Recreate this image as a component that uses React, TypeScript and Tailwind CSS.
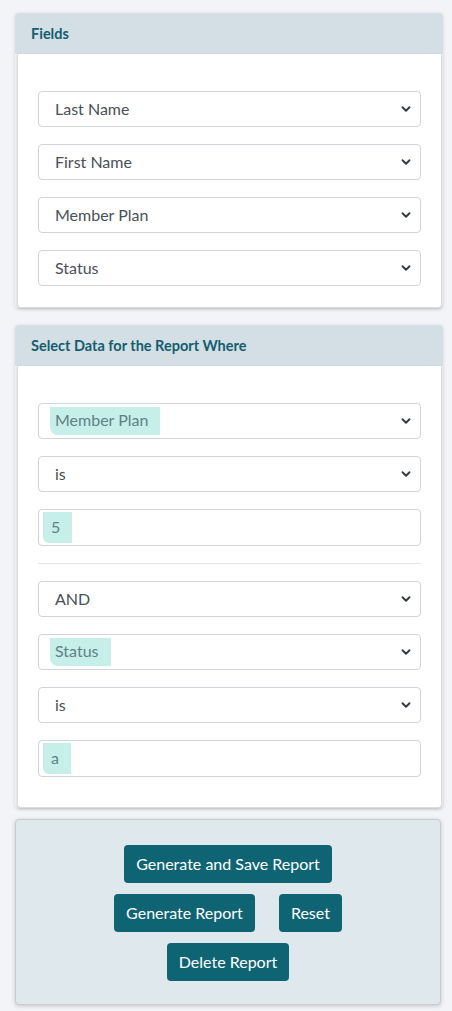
import { ChevronDown } from "lucide-react";

const font = { fontFamily: "Lato, 'Noto Sans', sans-serif" };

function FakeSelect({ value, marked }: { value: string; marked?: boolean }) {
  return (
    <div className="h-9 flex items-center justify-between rounded border border-[#ced4da] bg-white pl-4 pr-[7px]">
      {marked ? (
        <span className="-ml-[5px] pl-[5px] pr-3 pt-[1px] pb-[3px] bg-[#c6efe9] rounded-bl-lg text-[#5f8184] text-base">
          {value}
        </span>
      ) : (
        <span className="text-base text-[#495057]">{value}</span>
      )}
      <ChevronDown className="w-[14px] h-[14px] text-[#343a40]" strokeWidth={3.2} />
    </div>
  );
}

function FakeInput({ value }: { value: string }) {
  return (
    <div className="h-[37px] flex items-center rounded border border-[#ced4da] bg-white px-[4px]">
      <span className="pl-2 pr-3 pt-[3px] pb-[4px] bg-[#c6efe9] rounded-bl-md text-[#5f8184] text-base">
        {value}
      </span>
    </div>
  );
}

function Card({ title, children, className }: { title: string; children: React.ReactNode; className: string }) {
  return (
    <div className="shadow-[0_1px_4px_rgba(0,0,0,0.12)] rounded">
      <div className="h-[41px] flex items-center px-4 bg-[#d3dfe4] rounded-t">
        <h2 className="text-[14.5px] font-bold text-[#135d6f]">{title}</h2>
      </div>
      <div className={`ml-[2px] mr-[1px] bg-white rounded-b border border-t-0 border-[#dcdcdc] shadow-[0_1px_3px_rgba(0,0,0,0.15)] pl-5 pr-[20px] ${className}`}>
        {children}
      </div>
    </div>
  );
}

export default function App() {
  return (
    <div className="min-h-screen bg-[#f3f4f8] pl-[15px] pr-[9px] pt-[13px] pb-2 flex flex-col gap-[17px]" style={font}>
      <Card title="Fields" className="pt-[37px] pb-[21px]">
        <div className="flex flex-col gap-[17px]">
          <FakeSelect value="Last Name" />
          <FakeSelect value="First Name" />
          <FakeSelect value="Member Plan" />
          <FakeSelect value="Status" />
        </div>
      </Card>

      <Card title="Select Data for the Report Where" className="pt-[37px] pb-[30px]">
        <div className="flex flex-col gap-[17px]">
          <FakeSelect value="Member Plan" marked />
          <FakeSelect value="is" />
          <FakeInput value="5" />
        </div>
        <hr className="my-[17px] border-[#e2e4e8]" />
        <div className="flex flex-col gap-[17px]">
          <FakeSelect value="AND" />
          <FakeSelect value="Status" marked />
          <FakeSelect value="is" />
          <FakeInput value="a" />
        </div>
      </Card>

      <div className="-mt-[6px] mr-[2px] bg-[#dee8ed] border border-[#c9cdd0] rounded shadow-[0_1px_4px_rgba(0,0,0,0.2)] pt-[25px] pb-[23px] flex flex-col items-center gap-[11px]">
        <button className="h-[38px] px-3 rounded bg-[#0f6474] text-white text-base">
          Generate and Save Report
        </button>
        <div className="flex gap-6">
          <button className="h-[38px] px-3 rounded bg-[#0f6474] text-white text-base">
            Generate Report
          </button>
          <button className="h-[38px] px-3 rounded bg-[#0f6474] text-white text-base">
            Reset
          </button>
        </div>
        <button className="h-[38px] px-3 rounded bg-[#0f6474] text-white text-base">
          Delete Report
        </button>
      </div>
    </div>
  );
}
